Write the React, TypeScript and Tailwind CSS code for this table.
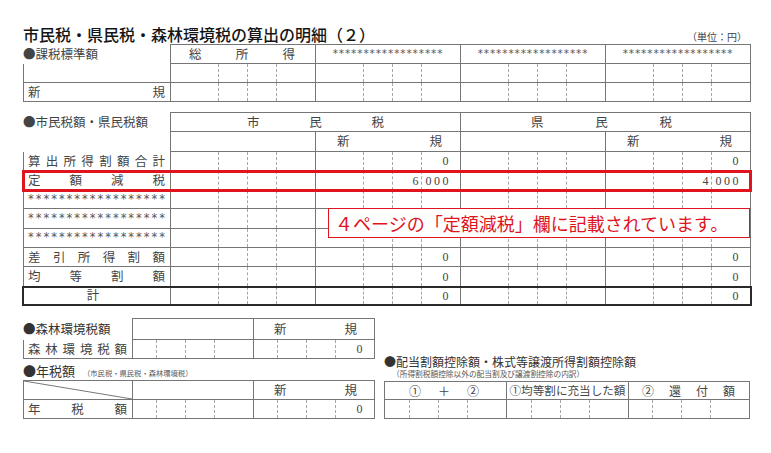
const LINE = "border-[#767676]";
const DASH = "border-dashed border-[#a6a6a6]";
const STARS = "******************";

function Spread({ text, className = "" }: { text: string; className?: string }) {
  return (
    <div className={`flex items-center justify-between ${className}`}>
      {[...text].map((c, i) => (
        <span key={i}>{c}</span>
      ))}
    </div>
  );
}

// one money cell: dashed separators every three digits, last group 39px wide
function Grid({ first, vals = ["", "", "", ""] }: { first: string; vals?: string[] }) {
  const segs = [first, "w-[29px]", "w-[29px]", "w-[39px]"];
  return (
    <div className={`flex h-full shrink-0 border-b ${LINE}`}>
      {segs.map((w, i) => (
        <div
          key={i}
          className={`${w} flex h-full shrink-0 items-center justify-end border-r font-['Liberation_Serif',serif] text-[12px] tracking-[2.5px] text-[#444] ${
            i === 3 ? `${LINE} pr-[9px]` : DASH
          }`}
        >
          {vals[i]}
        </div>
      ))}
    </div>
  );
}

function Label({ text, w = "w-[148px]", className = "" }: { text: string; w?: string; className?: string }) {
  return (
    <Spread
      text={text}
      className={`${w} h-full shrink-0 border-b border-l border-r ${LINE} pl-[4px] pr-[5px] text-[12.5px] text-[#444] ${className}`}
    />
  );
}

const zero = ["", "", "", "0"];

function TaxRow({ label, h, vals, className = "" }: { label: React.ReactNode; h: string; vals: [string[], string[]]; className?: string }) {
  return (
    <div className={`flex w-[728px] ${h} ${className}`}>
      {label}
      <Grid first="w-[48px]" />
      <Grid first="w-[48px]" vals={vals[0]} />
      <Grid first="w-[48px]" />
      <Grid first="w-[48px]" vals={vals[1]} />
    </div>
  );
}

function StarLabel() {
  return (
    <Spread
      text={STARS}
      className={`w-[148px] h-full shrink-0 border-b border-l border-r ${LINE} pl-[4px] pr-[5px] font-['DejaVu_Sans',sans-serif] text-[11.5px] text-[#555]`}
    />
  );
}

export default function App() {
  return (
    <div className="relative h-[453px] w-[771px] overflow-hidden bg-white pl-[23px] pt-[24px] font-['Noto_Sans_CJK_JP',sans-serif] text-[#3a3a3a]">
      {/* title */}
      <div className="flex h-[20px] w-[728px] items-end justify-between">
        <h1 className="text-[16px] font-medium leading-[20px] text-[#151515]">市民税・県民税・森林環境税の算出の明細（２）</h1>
        <span className="mb-[1px] pr-[4px] text-[10px] leading-[12px] text-[#444]">（単位：円）</span>
      </div>

      {/* 課税標準額 */}
      <div className="flex h-[20px]">
        <div className={`flex w-[148px] shrink-0 items-center border-r ${LINE} text-[12.5px] text-[#444]`}>●課税標準額</div>
        <Spread text="総所得" className={`w-[145px] shrink-0 border-y border-r ${LINE} pl-[18px] pr-[20px] text-[12.5px] text-[#444]`} />
        {[0, 1, 2].map((i) => (
          <div
            key={i}
            className={`flex w-[145px] shrink-0 items-center justify-center border-y border-r ${LINE} font-['DejaVu_Sans',sans-serif] text-[10.5px] tracking-[0.9px] text-[#555]`}
          >
            {STARS}
          </div>
        ))}
      </div>
      <div className="flex h-[19px]">
        <div className={`w-[148px] shrink-0 border-b border-l border-r ${LINE}`} />
        {[0, 1, 2, 3].map((i) => (
          <Grid key={i} first="w-[48px]" />
        ))}
      </div>
      <div className="flex h-[19px]">
        <Label text="新規" />
        {[0, 1, 2, 3].map((i) => (
          <Grid key={i} first="w-[48px]" />
        ))}
      </div>

      {/* 市民税額・県民税額 */}
      <div className="mt-[10px] flex h-[20px]">
        <div className={`flex w-[148px] shrink-0 items-center border-r ${LINE} text-[12.5px] text-[#444]`}>●市民税額・県民税額</div>
        <Spread text="市民税" className={`w-[290px] shrink-0 border-y border-r ${LINE} px-[76px] text-[12.5px] text-[#444]`} />
        <Spread text="県民税" className={`w-[290px] shrink-0 border-y border-r ${LINE} pl-[70px] pr-[78px] text-[12.5px] text-[#444]`} />
      </div>
      <div className="flex h-[20px]">
        <div className={`w-[148px] shrink-0 border-r ${LINE}`} />
        <div className={`w-[145px] shrink-0 border-b border-r ${LINE}`} />
        <Spread text="新規" className={`w-[145px] shrink-0 border-b border-r ${LINE} pl-[21px] pr-[18px] text-[12.5px] text-[#444]`} />
        <div className={`w-[145px] shrink-0 border-b border-r ${LINE}`} />
        <Spread text="新規" className={`w-[145px] shrink-0 border-b border-r ${LINE} pl-[21px] pr-[18px] text-[12.5px] text-[#444]`} />
      </div>
      <TaxRow h="h-[19px]" label={<Label text="算出所得割額合計" />} vals={[zero, zero]} />
      <TaxRow
        h="h-[20px]"
        className="outline-[3px] -outline-offset-2 outline-[#e0141e]"
        label={<Label text="定額減税" />}
        vals={[["", "", "6", "000"], ["", "", "4", "000"]]}
      />
      <TaxRow h="h-[18px]" label={<StarLabel />} vals={[[], []]} />
      <TaxRow h="h-[20px]" label={<StarLabel />} vals={[[], []]} />
      <TaxRow h="h-[19px]" label={<StarLabel />} vals={[[], []]} />
      <TaxRow h="h-[19px]" label={<Label text="差引所得割額" />} vals={[zero, zero]} />
      <TaxRow h="h-[20px]" label={<Label text="均等割額" />} vals={[zero, zero]} />
      <TaxRow
        h="h-[18px]"
        className="outline-2 -outline-offset-1 outline-[#2a2a2a]"
        label={
          <div className={`flex w-[148px] shrink-0 items-center justify-center border-b border-l border-r ${LINE} pr-[8px] text-[12.5px] text-[#444]`}>
            計
          </div>
        }
        vals={[zero, zero]}
      />

      {/* bottom blocks */}
      <div className="mt-[13px] flex">
        <div className="w-[352px] shrink-0">
          <div className="flex h-[22px]">
            <div className={`flex w-[110px] shrink-0 items-center border-r ${LINE} text-[12.5px] text-[#333]`}>●森林環境税額</div>
            <div className={`w-[121px] shrink-0 border-y border-r ${LINE}`} />
            <Spread text="新規" className={`w-[121px] shrink-0 border-y border-r ${LINE} pl-[20px] pr-[17px] text-[12.5px] text-[#444]`} />
          </div>
          <div className="flex h-[19px]">
            <Label text="森林環境税額" w="w-[110px]" />
            <Grid first="w-[24px]" />
            <Grid first="w-[24px]" vals={zero} />
          </div>

          <div className="flex h-[21px] items-end pb-[1px]">
            <span className="text-[13px] leading-[16px] text-[#333]">●年税額</span>
            <span className="ml-[8px] text-[7.3px] leading-[12px] text-[#555]">（市民税・県民税・森林環境税）</span>
          </div>
          <div className="flex h-[20px]">
            <div className={`w-[110px] shrink-0 border-y border-l border-r ${LINE}`}>
              <svg className="block h-full w-full" viewBox="0 0 108 18" preserveAspectRatio="none">
                <line x1="0" y1="0" x2="108" y2="18" stroke="#767676" strokeWidth="1" vectorEffect="non-scaling-stroke" />
              </svg>
            </div>
            <div className={`w-[121px] shrink-0 border-y border-r ${LINE}`} />
            <Spread text="新規" className={`w-[121px] shrink-0 border-y border-r ${LINE} pl-[20px] pr-[17px] text-[12.5px] text-[#444]`} />
          </div>
          <div className="flex h-[19px]">
            <Label text="年税額" w="w-[110px]" />
            <Grid first="w-[24px]" />
            <Grid first="w-[24px]" vals={zero} />
          </div>
        </div>

        <div className="ml-[9px] w-[366px] shrink-0">
          <div className="flex h-[63px] flex-col justify-end pb-[2px]">
            <div className="text-[12px] leading-[14px] text-[#333]">●配当割額控除額・株式等譲渡所得割額控除額</div>
            <div className="pl-[8px] text-[7.7px] leading-[10px] text-[#555]">（所得割税額控除以外の配当割及び譲渡割控除の内訳）</div>
          </div>
          <div className={`border-l ${LINE}`}>
            <div className="flex h-[19px]">
              <Spread text="①＋②" className={`w-[122px] shrink-0 border-y border-r ${LINE} pl-[24px] pr-[27px] text-[12px] text-[#444]`} />
              <div className={`flex w-[122px] shrink-0 items-center justify-center border-y border-r ${LINE} text-[11.6px] text-[#444]`}>①均等割に充当した額</div>
              <Spread text="②還付額" className={`w-[121px] shrink-0 border-y border-r ${LINE} pl-[13px] pr-[14px] text-[12px] text-[#444]`} />
            </div>
            <div className="flex h-[19px]">
              <Grid first="w-[25px]" />
              <Grid first="w-[25px]" />
              <Grid first="w-[24px]" />
            </div>
          </div>
        </div>
      </div>

      {/* note over the table */}
      <div className="absolute left-[328px] top-[208px] flex h-[30px] w-[422px] items-center border border-[#e0141e] bg-white pl-[6px] text-[18px] leading-none text-[#e0141e]">
        ４ページの「定額減税」欄に記載されています。
      </div>
    </div>
  );
}
